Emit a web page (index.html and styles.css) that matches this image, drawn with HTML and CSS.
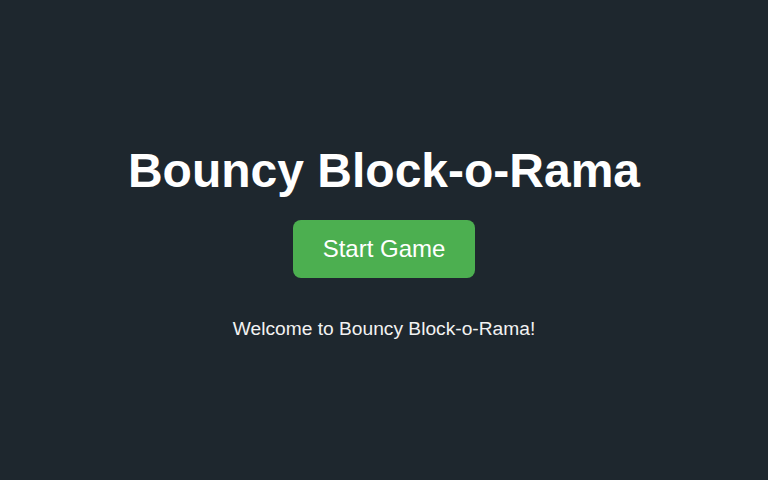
FILE: index.html
```html
<!DOCTYPE html>
<html lang="en">
<head>
<meta charset="utf-8">
<title>Bouncy Block-o-Rama</title>
<link rel="stylesheet" href="styles.css">
</head>
<body>
<main class="screen">
  <h1 class="title">Bouncy Block-o-Rama</h1>
  <button class="start-btn" type="button">Start Game</button>
  <p class="message">Welcome to Bouncy Block-o-Rama!</p>
</main>
</body>
</html>
```

FILE: styles.css
```css
html, body {
  margin: 0;
  padding: 0;
  height: 100%;
}
body {
  background: #1e272e;
  color: #ffffff;
  font-family: "Liberation Sans", Arial, sans-serif;
}
.screen {
  box-sizing: border-box;
  height: 100%;
  padding-top: 2px;
  display: flex;
  flex-direction: column;
  align-items: center;
  justify-content: center;
}
.title {
  margin: 0 0 22px;
  font-size: 48px;
  font-weight: bold;
  line-height: normal;
}
.start-btn {
  font-family: inherit;
  font-size: 24px;
  line-height: normal;
  color: #ffffff;
  background: #4caf50;
  border: none;
  border-radius: 8px;
  padding: 15px 30px;
  cursor: pointer;
}
.message {
  margin: 40px 0 0;
  font-size: 19.2px;
  line-height: normal;
  color: #f2f2f2;
}
```
